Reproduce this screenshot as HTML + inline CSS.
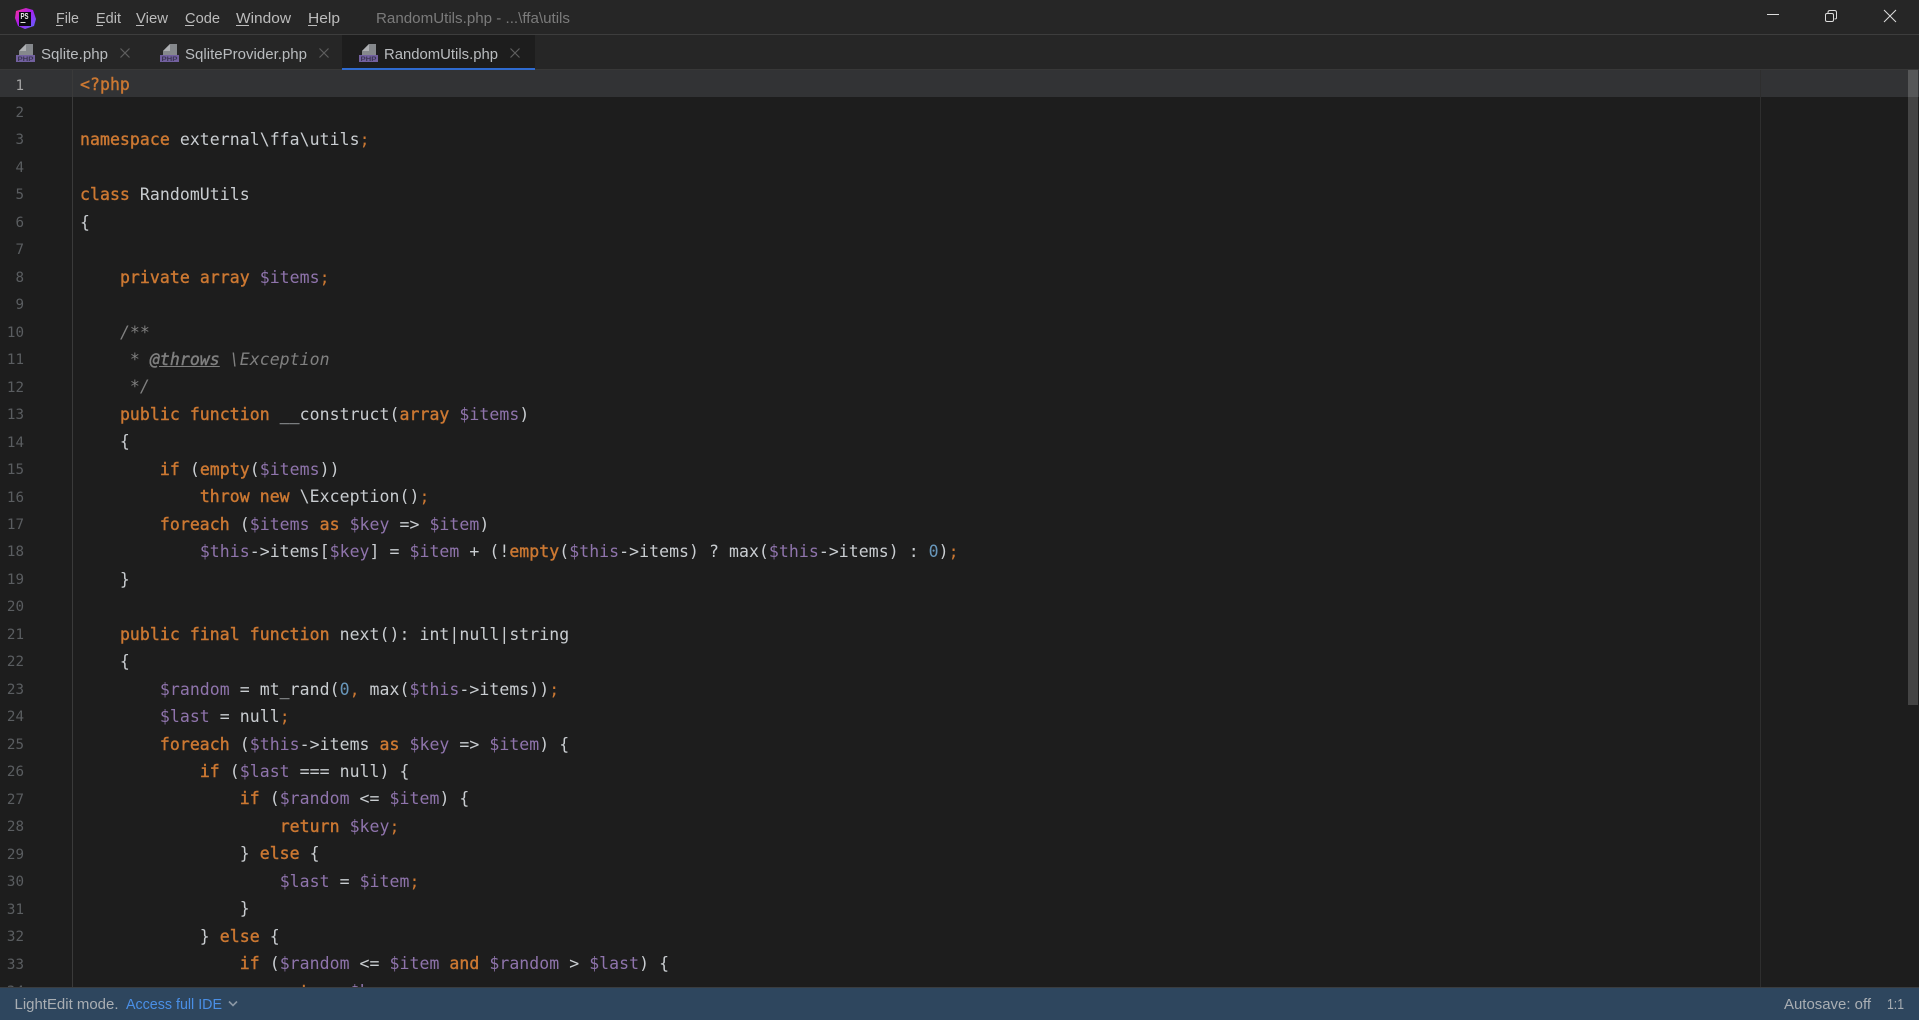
<!DOCTYPE html>
<html lang="en">
<head>
<meta charset="utf-8">
<title>RandomUtils.php</title>
<style>
html,body{margin:0;padding:0;background:#1d1d1d;}
body{width:1919px;height:1020px;overflow:hidden;position:relative;}
#cur{position:absolute;left:0;top:70px;width:1919px;height:27px;background:#323335;}
#gut{position:absolute;left:72px;top:70px;width:1px;height:917px;background:#3a3a3a;}
#mar{position:absolute;left:1760px;top:70px;width:1px;height:917px;background:#2e2e2e;}
#sb{position:absolute;left:1908px;top:70px;width:10px;height:635px;background:#444;}
#sb2{position:absolute;left:1908px;top:70px;width:10px;height:27px;background:#565758;}
pre{margin:0;position:absolute;white-space:pre;}
#num{left:0;top:72.5px;width:24px;text-align:right;font:14.2px/27.47px "DejaVu Sans Mono","Liberation Mono",monospace;color:#5a5d60;}
#num b{font-weight:normal;color:#a4a4a4;}
#code{left:80px;top:71.3px;font:16.5px/27.47px "DejaVu Sans Mono","Liberation Mono",monospace;letter-spacing:0.05px;color:#c9cdd1;}
.k{color:#cc7832;font-weight:normal;-webkit-text-stroke:0.4px #cc7832;}
.o{color:#cc7832;}
.v{color:#8f74ac;}
.n{color:#6897bb;}
.c{color:#808080;font-style:italic;}
.t{color:#808080;font-style:italic;font-weight:normal;-webkit-text-stroke:0.4px #808080;text-decoration:underline;}
#chrome{position:absolute;left:0;top:0;}
</style>
</head>
<body>
<div id="cur"></div>
<div id="gut"></div>
<div id="mar"></div>
<pre id="num"><b>1</b>
2
3
4
5
6
7
8
9
10
11
12
13
14
15
16
17
18
19
20
21
22
23
24
25
26
27
28
29
30
31
32
33
34</pre>
<pre id="code"><span class="k">&lt;?php</span>

<span class="k">namespace</span> external\ffa\utils<span class="o">;</span>

<span class="k">class</span> RandomUtils
{

    <span class="k">private</span> <span class="k">array</span> <span class="v">$items</span><span class="o">;</span>

    <span class="c">/**</span>
     <span class="c">* </span><span class="t">@throws</span><span class="c"> \Exception</span>
     <span class="c">*/</span>
    <span class="k">public</span> <span class="k">function</span> __construct(<span class="k">array</span> <span class="v">$items</span>)
    {
        <span class="k">if</span> (<span class="k">empty</span>(<span class="v">$items</span>))
            <span class="k">throw</span> <span class="k">new</span> \Exception()<span class="o">;</span>
        <span class="k">foreach</span> (<span class="v">$items</span> <span class="k">as</span> <span class="v">$key</span> =&gt; <span class="v">$item</span>)
            <span class="v">$this</span>-&gt;items[<span class="v">$key</span>] = <span class="v">$item</span> + (!<span class="k">empty</span>(<span class="v">$this</span>-&gt;items) ? max(<span class="v">$this</span>-&gt;items) : <span class="n">0</span>)<span class="o">;</span>
    }

    <span class="k">public</span> <span class="k">final</span> <span class="k">function</span> next(): int|null|string
    {
        <span class="v">$random</span> = mt_rand(<span class="n">0</span><span class="o">,</span> max(<span class="v">$this</span>-&gt;items))<span class="o">;</span>
        <span class="v">$last</span> = null<span class="o">;</span>
        <span class="k">foreach</span> (<span class="v">$this</span>-&gt;items <span class="k">as</span> <span class="v">$key</span> =&gt; <span class="v">$item</span>) {
            <span class="k">if</span> (<span class="v">$last</span> === null) {
                <span class="k">if</span> (<span class="v">$random</span> &lt;= <span class="v">$item</span>) {
                    <span class="k">return</span> <span class="v">$key</span><span class="o">;</span>
                } <span class="k">else</span> {
                    <span class="v">$last</span> = <span class="v">$item</span><span class="o">;</span>
                }
            } <span class="k">else</span> {
                <span class="k">if</span> (<span class="v">$random</span> &lt;= <span class="v">$item</span> <span class="k">and</span> <span class="v">$random</span> &gt; <span class="v">$last</span>) {
                    <span class="k">return</span> <span class="v">$key</span><span class="o">;</span></pre>
<div id="sb"></div>
<div id="sb2"></div>
<svg id="chrome" width="1919" height="1020" viewBox="0 0 1919 1020" xmlns="http://www.w3.org/2000/svg" font-family="'Liberation Sans',sans-serif">
<defs>
<linearGradient id="lg" x1="0" y1="0" x2="1" y2="1">
<stop offset="0" stop-color="#ff318c"/><stop offset="0.45" stop-color="#a91df0"/><stop offset="1" stop-color="#5a6bff"/>
</linearGradient>
<g id="phpi">
<path d="M10 0H17V11H3V7Z" fill="#85888c"/>
<path d="M10 0V7H3Z" fill="#aeb0b3"/>
<rect x="0" y="11" width="19" height="7" fill="#72609f"/>
<text x="9.5" y="17" font-size="6.500" font-weight="bold" text-anchor="middle" fill="#3a3650" textLength="16" lengthAdjust="spacingAndGlyphs">PHP</text>
</g>
</defs>
<!-- title bar -->
<rect x="0" y="0" width="1919" height="34" fill="#262626"/>
<rect x="0" y="34" width="1919" height="1" fill="#3d3d3d"/>
<rect x="0" y="35" width="1919" height="34" fill="#262626"/>
<rect x="0" y="69" width="1919" height="1" fill="#383838"/>
<!-- logo -->
<path d="M16 11L26 8L33 10L36 19L34 26L25 29L18 26L15 18Z" fill="url(#lg)"/>
<rect x="19" y="12" width="12" height="14" fill="#0b0b12"/>
<text x="20.500" y="19" font-size="8" font-weight="bold" fill="#f0f0f0" textLength="8" lengthAdjust="spacingAndGlyphs">PS</text>
<rect x="20.500" y="22" width="5" height="1" fill="#e0e0e0"/>
<!-- menu -->
<g font-size="14.5" fill="#bcbcbc">
<text x="56" y="23" textLength="23" lengthAdjust="spacingAndGlyphs">File</text>
<text x="96" y="23" textLength="25" lengthAdjust="spacingAndGlyphs">Edit</text>
<text x="136" y="23" textLength="32" lengthAdjust="spacingAndGlyphs">View</text>
<text x="185" y="23" textLength="35" lengthAdjust="spacingAndGlyphs">Code</text>
<text x="236" y="23" textLength="55" lengthAdjust="spacingAndGlyphs">Window</text>
<text x="308" y="23" textLength="32" lengthAdjust="spacingAndGlyphs">Help</text>
</g>
<g fill="#bcbcbc">
<rect x="56" y="25" width="7" height="1"/>
<rect x="96" y="25" width="7" height="1"/>
<rect x="136" y="25" width="8" height="1"/>
<rect x="185" y="25" width="9" height="1"/>
<rect x="236" y="25" width="13" height="1"/>
<rect x="308" y="25" width="9" height="1"/>
</g>
<text x="376" y="23" font-size="14.5" fill="#7b7b7b" textLength="194" lengthAdjust="spacingAndGlyphs">RandomUtils.php - ...\ffa\utils</text>
<!-- window controls -->
<g fill="none" stroke="#dcdcdc" stroke-width="1">
<path d="M1767 14.500H1779"/>
<rect x="1825.500" y="13.500" width="8" height="8" rx="1.500"/>
<path d="M1828 13V12.500Q1828 10.500 1830 10.500H1834.500Q1836.500 10.500 1836.500 12.500V18Q1836.500 19 1834.500 19"/>
<path d="M1884 10L1896 22M1896 10L1884 22"/>
</g>
<!-- tabs -->
<rect x="342" y="35" width="193" height="33" fill="#1d1d1d"/>
<rect x="342" y="68" width="193" height="2" fill="#2f6bd0"/>
<use href="#phpi" x="16" y="44"/>
<use href="#phpi" x="160" y="44"/>
<use href="#phpi" x="359" y="44"/>
<g font-size="14.5" fill="#b9bcbf">
<text x="41" y="59" textLength="67" lengthAdjust="spacingAndGlyphs">Sqlite.php</text>
<text x="185" y="59" textLength="122" lengthAdjust="spacingAndGlyphs">SqliteProvider.php</text>
<text x="384" y="59" textLength="114" lengthAdjust="spacingAndGlyphs">RandomUtils.php</text>
</g>
<g fill="none" stroke="#5e5e5e" stroke-width="1.2">
<path d="M120.500 48.500l9 9M129.500 48.500l-9 9"/>
<path d="M319.500 48.500l9 9M328.500 48.500l-9 9"/>
<path d="M510.500 48.500l9 9M519.500 48.500l-9 9"/>
</g>
<!-- status bar -->
<rect x="0" y="987" width="1919" height="1" fill="#3a3d40"/>
<rect x="0" y="988" width="1919" height="32" fill="#2e465e"/>
<text x="14.500" y="1009" font-size="14.5" fill="#a9aeb3" textLength="104" lengthAdjust="spacingAndGlyphs">LightEdit mode.</text>
<text x="126" y="1009" font-size="14.5" fill="#4a8fe6" textLength="96" lengthAdjust="spacingAndGlyphs">Access full IDE</text>
<path d="M229 1001.500l4 4 4-4" fill="none" stroke="#8a97a4" stroke-width="1.6"/>
<text x="1784" y="1009" font-size="14.5" fill="#a9aeb3" textLength="87" lengthAdjust="spacingAndGlyphs">Autosave: off</text>
<text x="1887" y="1009" font-size="14.5" fill="#a9aeb3" textLength="17" lengthAdjust="spacingAndGlyphs">1:1</text>
</svg>
</body>
</html>
